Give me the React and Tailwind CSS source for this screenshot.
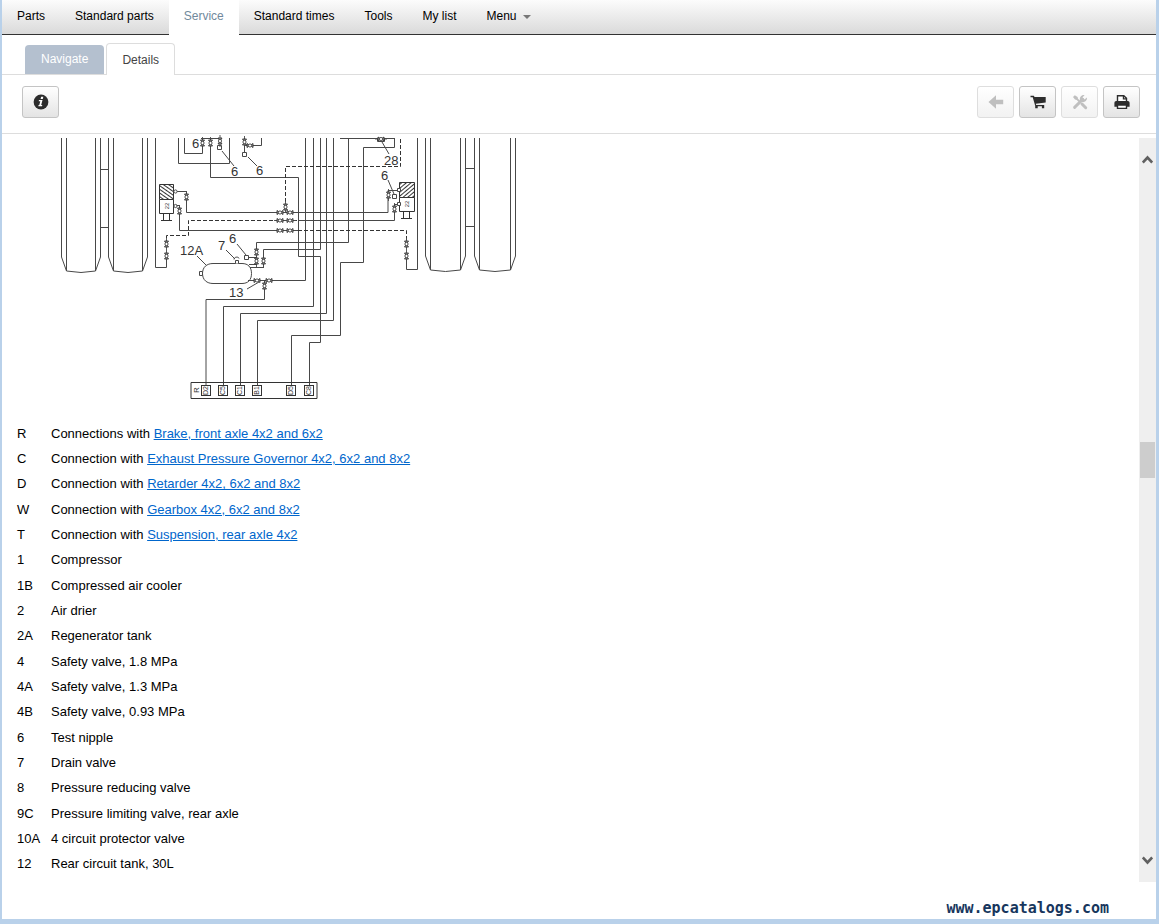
import React from "react";

const NAV = ["Parts", "Standard parts", "Service", "Standard times", "Tools", "My list"];

const ROWS = [
  ["R", "Connections with", "Brake, front axle 4x2 and 6x2"],
  ["C", "Connection with", "Exhaust Pressure Governor 4x2, 6x2 and 8x2"],
  ["D", "Connection with", "Retarder 4x2, 6x2 and 8x2"],
  ["W", "Connection with", "Gearbox 4x2, 6x2 and 8x2"],
  ["T", "Connection with", "Suspension, rear axle 4x2"],
  ["1", "Compressor"],
  ["1B", "Compressed air cooler"],
  ["2", "Air drier"],
  ["2A", "Regenerator tank"],
  ["4", "Safety valve, 1.8 MPa"],
  ["4A", "Safety valve, 1.3 MPa"],
  ["4B", "Safety valve, 0.93 MPa"],
  ["6", "Test nipple"],
  ["7", "Drain valve"],
  ["8", "Pressure reducing valve"],
  ["9C", "Pressure limiting valve, rear axle"],
  ["10A", "4 circuit protector valve"],
  ["12", "Rear circuit tank, 30L"],
];

function ToolButton({ label, disabled, children }) {
  return (
    <button
      type="button"
      aria-label={label}
      disabled={disabled}
      className="flex h-8 w-[37px] items-center justify-center rounded-[3px] border border-[#c4c4c4] bg-linear-to-b from-white to-[#e4e4e4] text-[#2d2d2d] disabled:border-[#dedede] disabled:to-[#f2f2f2] disabled:text-[#bfbfbf]"
    >
      {children}
    </button>
  );
}

const InfoIcon = () => (
  <svg width="16" height="16" viewBox="0 0 16 16" aria-hidden="true">
    <circle cx="8" cy="8" r="7.4" fill="currentColor" />
    <path d="M8.1 2.8h2.2l-.5 2.1H7.6zM6 6h3.5l-1.3 5h1.1l-.3 1.3H5.3l.3-1.3h.7l1-3.8H5.7z" fill="#fff" />
  </svg>
);
const BackIcon = () => (
  <svg width="16" height="16" viewBox="0 0 16 16" fill="currentColor" aria-hidden="true">
    <path d="M.5 8L8 1.200V5.800h7.200v4.400H8v4.600z" />
  </svg>
);
const CartIcon = () => (
  <svg width="16" height="16" viewBox="0 0 16 16" fill="currentColor" aria-hidden="true">
    <path d="M.5 1.700h3.300l.8 1.300h11.100v5.400L5.800 9.800l.4 1.100h8v3.400h-2.300v-2H7.700v2H5.200v-2.600L2.700 3.200H.5z" />
  </svg>
);
const ToolsIcon = () => (
  <svg width="16" height="16" viewBox="0 0 16 16" aria-hidden="true">
    <path d="M2.600 13.400L10.800 5.200" stroke="currentColor" strokeWidth="2.900" strokeLinecap="round" />
    <path d="M14.900 3.400L12.500 5.500 10.500 3.500 12.600 1.100a4 4 0 0 0-4.700 4.800l2.200 2.200a4 4 0 0 0 4.800-4.700z" fill="currentColor" />
    <path d="M1 3l1.800-1.800L5.600 3l.4 1.700 2.600 2.600-1.300 1.300L4.700 6 3 5.600z" fill="currentColor" />
    <path d="M10 10l3.700 3.700" stroke="currentColor" strokeWidth="3" strokeLinecap="round" />
  </svg>
);
const PrintIcon = () => (
  <svg width="16" height="16" viewBox="0 0 16 16" aria-hidden="true">
    <path d="M3.500 8V1.700h6.300l2.700 2.700V8" fill="#fff" stroke="currentColor" strokeWidth="1.400" />
    <path d="M9.400 1.500v3.300h3.300" fill="none" stroke="currentColor" strokeWidth="1.200" />
    <path d="M2.200 7h11.600a1.800 1.800 0 0 1 1.800 1.800v4H.4v-4A1.800 1.800 0 0 1 2.200 7z" fill="currentColor" />
    <path d="M3.500 11h9v3.400h-9z" fill="#fff" stroke="currentColor" strokeWidth="1.400" />
  </svg>
);

function Valve({ x, y, v }) {
  return (
    <g transform={`translate(${x} ${y})${v ? " rotate(90)" : ""}`} fill="none" strokeWidth="0.9">
      <path d="M-6 0h3M3 0h3" />
      <path d="M-3-2L3 2V-2L-3 2z" fill="#999" stroke="#333" />
      <circle r="1.600" fill="#fff" />
    </g>
  );
}

function Wheel({ x, w, bottom }) {
  return (
    <g>
      <path d={`M${x} 0V${bottom - 15}L${x + 5} ${bottom - 1}Q${x + w / 2} ${bottom + 2} ${x + w - 5} ${bottom - 1}L${x + w} ${bottom - 15}V0`} />
      <path d={`M${x + 5} 0V${bottom - 1}M${x + w - 5} 0V${bottom - 1}`} />
    </g>
  );
}

const PORTS = [
  [206, "D2"],
  [223, "C5"],
  [240, "C1"],
  [257, "B1"],
  [291, "D5"],
  [309, "C8"],
];

function Diagram() {
  return (
    <svg
      width="470"
      height="264"
      viewBox="55 0 470 264"
      role="img"
      aria-label="Brake circuit, rear axle"
      fill="none"
      stroke="#484848"
      strokeWidth="1"
      className="block overflow-visible"
    >
      <defs>
        <pattern id="hatchL" width="3" height="3" patternUnits="userSpaceOnUse" patternTransform="rotate(35)">
          <path d="M0 1.500H3" stroke="#333" strokeWidth="1" />
        </pattern>
        <pattern id="hatchR" width="3" height="3" patternUnits="userSpaceOnUse" patternTransform="rotate(-40)">
          <path d="M0 1.500H3" stroke="#333" strokeWidth="1" />
        </pattern>
      </defs>

      <Wheel x={61.5} w={39} bottom={134} />
      <Wheel x={108.5} w={39} bottom={134} />
      <path d="M100.500 31.500h8M100.500 89.500h8" />
      <Wheel x={425.5} w={40} bottom={133} />
      <Wheel x={474.5} w={41} bottom={133} />
      <path d="M465.500 30.500h9M465.500 88.500h9" />

      <path d="M155.500 0V129.500H166.500V118M417.500 0V131.500H406.500V118" />
      <path d="M178.500 0V25.500H229.500V0M184.500 0V15.500H202.500V0M210.500 0V39.500H298.500V118.500H320.500V204.500H309.500V247" />
      <path d="M201 .5h19M261.500 0V7.500H246M244.500 0v14M222 13l12 15M248 19l9 9M382 4l7 12M340 .5h55" />
      <path d="M305.500 0V142.500H250M313.500 0V168.500H223.500V247M320.500 0V111.500H263.500V129" />
      <path d="M326.500 0V175.500H240.500V247M333.500 0V182.500H257.500V247M348.500 0V104.500H256.500V126" />
      <path d="M394.500 0V9.500H363.500V124.500H340.500V197.500H291.500V247M206 247V161.500H264.500V143" />
      <path d="M176 53.500H186.500V74.500H388V52.500H400" />
      <path d="M175 67.500H179.500V92.500H298M298 82.500H394.500V66.500H399" />
      <g stroke="#333" strokeDasharray="4 2">
        <path d="M285.500 70V28.500H400.500V0M298 92.500H406.500V105M166.500 106V97.500H188.500V82.500H298" />
      </g>

      <g fill="#fff">
        <path d="M159.500 46.500h14v15h-14z" fill="url(#hatchL)" stroke="#333" />
        <path d="M159.500 61.500h14v14h-14zM163.500 75.500v7h6v-7M161 82.500h11" stroke="#333" />
        <path d="M399.500 44.500h15v15h-15z" fill="url(#hatchR)" stroke="#333" />
        <path d="M399.500 59.500h15v14h-15zM403.500 73.500v7h6v-7M401 80.500h11" stroke="#333" />
        <circle cx="175.500" cy="53.500" r="1.600" />
        <circle cx="175.500" cy="68" r="1.600" />
        <path d="M397.500 50.500h3v3h-3zM397.500 64.500h3v3h-3z" />
        <path d="M202.500 135.500C202.500 129 207 125.500 213 125.500H242C248 125.500 251.500 129 251.500 135.500S248 145.500 242 145.500H213C207 145.500 202.500 142 202.500 135.500z" />
        <path d="M199.500 133.500h3v4h-3zM235.500 125.500v-3h3v3M234 121.500c0-3 5-3 5-1M244.500 117.500h4v4h-4zM217.500 7.500h4v4h-4zM242.500 14.500h4v4h-4zM392.500 56.500h4v4h-4zM377.500 0v3.500h7V0" />
      </g>
      <path d="M197 118l9 9M226 112l9 9M237 106l9 11M247 151l12-7M388 42l6 14M248 119.500h8M249 126.500h8M250 129.500h14M194 82.500h1M248 142.500h9" />

      <Valve x={186.500} y={59} v />
      <Valve x={179.500} y={73} v />
      <Valve x={166.500} y={106} v />
      <Valve x={166.500} y={118} v />
      <Valve x={406.500} y={106} v />
      <Valve x={406.500} y={118} v />
      <Valve x={388.500} y={57} v />
      <Valve x={394.500} y={71} v />
      <Valve x={202.500} y={5} v />
      <Valve x={210.500} y={5} v />
      <Valve x={220} y={3} v />
      <Valve x={244.500} y={4} v />
      <Valve x={250} y={7.5} />
      <Valve x={381} y={1} />
      <Valve x={280} y={74.5} />
      <Valve x={290} y={74.5} />
      <Valve x={280} y={82.5} />
      <Valve x={290} y={82.5} />
      <Valve x={280} y={92.5} />
      <Valve x={290} y={92.5} />
      <Valve x={285.500} y={69} v />
      <Valve x={256.500} y={114} v />
      <Valve x={256.500} y={123} v />
      <Valve x={263.500} y={123} v />
      <Valve x={264.500} y={148} v />
      <Valve x={257} y={142.5} />
      <Valve x={269} y={142.5} />

      <path d="M191 244.500h126v16H191z" stroke="#333" />
      <g fontFamily="Liberation Sans, sans-serif" fill="#333" stroke="none">
        <text transform="translate(199 255) rotate(-90)" fontSize="8">R</text>
        {PORTS.map(([x, name]) => (
          <g key={x}>
            <rect x={x - 4.5} y="247.500" width="9" height="10" fill="#fff" stroke="#333" />
            <text transform={`translate(${x + 2} 252.5) rotate(-90)`} textAnchor="middle" fontSize="7">{name}</text>
          </g>
        ))}
        <text transform="translate(169 68) rotate(-90)" textAnchor="middle" fontSize="6">22</text>
        <text transform="translate(409 66) rotate(-90)" textAnchor="middle" fontSize="6">22</text>
        <g fontSize="13">
          <text x="192" y="10">6</text>
          <text x="231" y="38">6</text>
          <text x="256" y="37">6</text>
          <text x="384" y="27">28</text>
          <text x="381" y="42">6</text>
          <text x="180" y="117">12A</text>
          <text x="218" y="112">7</text>
          <text x="229" y="105">6</text>
          <text x="229" y="159">13</text>
        </g>
      </g>
    </svg>
  );
}

export default function App() {
  return (
    <div className="flex min-h-screen flex-col border-r-3 border-b-[5px] border-l-2 border-[#b9d1ea] bg-white font-['Liberation_Sans',Arial,sans-serif] text-black">
      <nav className="flex h-[35px] border-b border-[#333] bg-linear-to-b from-[#fcfcfc] to-[#dadada] text-[12px]">
        {NAV.map((item) => (
          <a
            key={item}
            href="#"
            aria-current={item === "Service" ? "page" : undefined}
            className="-mb-px h-[35px] px-[15px] pt-2 leading-4 aria-[current=page]:bg-white aria-[current=page]:text-[#71899c]"
          >
            {item}
          </a>
        ))}
        <button type="button" className="flex h-8 gap-1.5 px-[15px] pt-2 leading-4">
          Menu
          <svg width="8" height="4" viewBox="0 0 8 4" className="mt-[7px]" aria-hidden="true">
            <path d="M0 0h8L4 4z" fill="#777" />
          </svg>
        </button>
      </nav>

      <div className="flex h-10 items-end border-b border-[#ddd] pl-[23px] text-[12px]">
        <a href="#" className="mr-0.5 h-[29px] rounded-t-[4px] bg-[#b4c0cf] px-4 pt-1.5 leading-4 text-white">
          Navigate
        </a>
        <a href="#" className="-mb-px h-8 rounded-t-[4px] border border-b-0 border-[#ddd] bg-white px-[15px] pt-2 leading-4 text-[#444]">
          Details
        </a>
      </div>

      <div className="flex h-[59px] items-start justify-between border-b border-[#ddd] pt-[11px] pr-4 pl-5">
        <ToolButton label="Information"><InfoIcon /></ToolButton>
        <div className="flex gap-[5px]">
          <ToolButton label="Back" disabled><BackIcon /></ToolButton>
          <ToolButton label="Cart"><CartIcon /></ToolButton>
          <ToolButton label="Tools" disabled><ToolsIcon /></ToolButton>
          <ToolButton label="Print"><PrintIcon /></ToolButton>
        </div>
      </div>

      <div className="mt-1 flex grow">
        <main className="grow">
          <div className="pl-[53px]">
            <Diagram />
          </div>
          <table className="mt-[19px] ml-[15px] h-[456px] text-[13px] leading-4">
            <tbody>
              {ROWS.map(([code, text, link]) => (
                <tr key={code}>
                  <td className="w-[34px] p-0 whitespace-nowrap">{code}</td>
                  <td className="p-0">
                    {text}
                    {link && (
                      <>
                        {" "}
                        <a href="#" className="text-[#0066cc] underline">{link}</a>
                      </>
                    )}
                  </td>
                </tr>
              ))}
            </tbody>
          </table>
        </main>
        <div className="flex w-[17px] flex-col items-center bg-[#efefef] py-4" aria-hidden="true">
          <svg width="11" height="11" viewBox="0 0 11 11">
            <path d="M.8 8.500L5.500 3.500l4.700 5" fill="none" stroke="#606060" strokeWidth="2.600" />
          </svg>
          <div className="mt-[277px] h-9 w-[15px] bg-[#cdcdcd]" />
          <svg width="11" height="11" viewBox="0 0 11 11" className="mt-auto">
            <path d="M.8 2.500L5.500 7.500l4.700-5" fill="none" stroke="#606060" strokeWidth="2.600" />
          </svg>
        </div>
      </div>

      <footer className="flex h-[37px] items-start justify-end pt-[18px] pr-[47px] font-['DejaVu_Sans_Mono',monospace] text-[15px] leading-4 font-bold text-[#17365d]">
        www.epcatalogs.com
      </footer>
    </div>
  );
}
